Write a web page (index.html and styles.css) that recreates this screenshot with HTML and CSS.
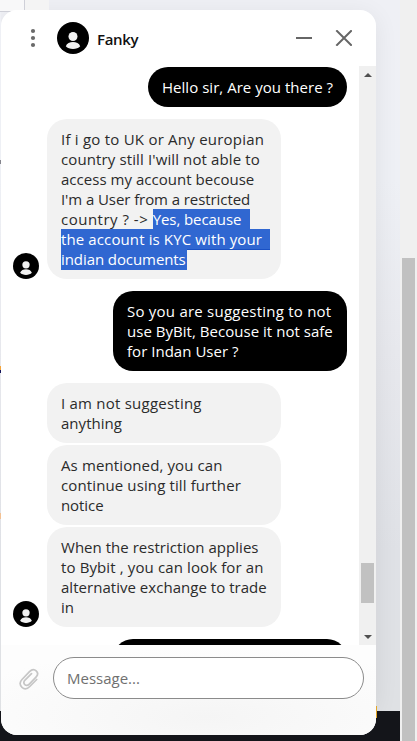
FILE: index.html
```html
<!DOCTYPE html>
<html lang="en">
<head>
<meta charset="utf-8">
<title>Fanky</title>
<link rel="stylesheet" href="styles.css">
</head>
<body>
<svg width="0" height="0" class="defs"><defs>
<symbol id="person" viewBox="0 0 32 32"><circle cx="16" cy="16" r="16" fill="#000"/><circle cx="16" cy="14.500" r="4.500" fill="#f2f2f2"/><path d="M8.800 24.300c1-3 4-4.300 7.200-4.300s6.200 1.300 7.200 4.300C21.600 26 19 27 16 27s-5.600-1-7.200-2.700z" fill="#f2f2f2"/></symbol>
</defs></svg>
<div class="page">
  <div class="corner"></div><div class="corner-strip"></div>
  <i class="edge edge-gray"></i><i class="edge edge-orange"></i><i class="edge edge-peach"></i>
  <i class="amber"></i>
  <main class="chat">
    <header class="head">
      <svg class="dots" width="6" height="20" viewBox="0 0 6 20" fill="#6a6a6a"><circle cx="3" cy="3" r="2.100"/><circle cx="3" cy="10" r="2.100"/><circle cx="3" cy="17" r="2.100"/></svg>
      <svg class="avatar-lg"><use href="#person"/></svg>
      <h1>Fanky</h1>
      <svg class="controls" width="56" height="16" viewBox="0 0 56 16" fill="none" stroke="#666" stroke-width="2"><path d="M0 8H16M40.300.3L55.700 15.700M55.700.3L40.300 15.700"/></svg>
    </header>
    <section class="body">
      <div class="messages">
        <div class="msg me first"><p><span class="t1">Hello sir, Are you there ?</span></p></div>
        <div class="msg"><svg class="avatar"><use href="#person"/></svg><p><span class="t3">If i go to UK or Any europian</span><br><span class="t2">country still I'will not able to</span><br><span class="t1">access my account becouse</span><br>I'm a User from a restricted<br><span class="t5">country ? -&gt; </span><span class="sel s1">Yes, because</span><br><span class="sel s2 t2">the account is KYC with your</span><br><span class="sel s3">indian documents</span></p></div>
        <div class="msg me"><p><span class="t3">So you are suggesting to not</span><br><span class="t1">use ByBit, Becouse it not safe</span><br><span class="t1">for Indan User ?</span></p></div>
        <div class="msg"><p><span class="t3">I am not suggesting</span><br><span class="t1">anything</span></p></div>
        <div class="msg joined"><p><span class="t2">As mentioned, you can</span><br><span class="t2">continue using till further</span><br>notice</p></div>
        <div class="msg joined"><svg class="avatar"><use href="#person"/></svg><p><span class="t1">When the restriction applies</span><br><span class="t2">to Bybit , you can look for an</span><br><span class="t1">alternative exchange to trade</span><br>in</p></div>
        <div class="msg me"><p>&nbsp;</p></div>
      </div>
      <div class="bar">
        <svg width="8" height="4" viewBox="0 0 8 4"><path d="M0 4L4 0l4 4z" fill="#505050"/></svg>
        <div class="thumb"></div>
        <svg width="8" height="4" viewBox="0 0 8 4"><path d="M0 0l4 4 4-4z" fill="#505050"/></svg>
      </div>
    </section>
    <footer class="foot">
      <svg class="clip" width="20" height="22" viewBox="0 0 20 22" fill="none" stroke="#c6c6c6" stroke-width="1.700" stroke-linecap="round"><path d="M17.700 11.500L10.800 18.500C8.500 20.800 5.500 21.600 3 19.300 .3 16.800 .7 13.900 3 11.500L10.500 3.700C12.500 1.600 15.200 1 17.200 2.900 19.300 4.900 18.800 7.300 17 9.200L10.300 16.100C8.900 17.500 7.200 17.900 5.800 16.600 4.300 15.200 4.700 13.500 6 12.200L12.500 5.700"/></svg>
      <div class="input">Message...</div>
    </footer>
  </main>
  <div class="page-bar"><div class="page-thumb"></div></div>
</div>
</body>
</html>
```
FILE: styles.css
```css
* { box-sizing: border-box; }
body { margin: 0; font-family: "Open Sans", "Noto Sans", sans-serif; font-size: 15px; line-height: 20px; }
.defs { position: absolute; }
.page {
  position: relative; display: flex; width: 417px; height: 741px; overflow: hidden;
  padding: 10px 0 0 1px;
  background: linear-gradient(#14151a, #14151a) 0 711px / 100% 30px no-repeat,
    linear-gradient(to bottom, #eff0f5 0, #eef0f5 180px, #e7e8ed 350px, #dfe1e6 550px, #dfe1e4 711px);
}
.corner { position: absolute; left: 0; top: 0; width: 25px; height: 12px; background: #f8f8f9; border-right: 1px solid #cfd0d8; border-bottom: 1px solid #cfd0d8; }
.corner-strip { position: absolute; left: 25px; top: 0; width: 24px; height: 12px; background: #f4f4f4; }
.edge { position: absolute; left: 0; width: 1px; }
.edge-gray { top: 160px; height: 4px; background: #85858d; }
.edge-orange { top: 366px; height: 7px; background: linear-gradient(#f4a43a 55%, #15155a 60%); }
.edge-peach { top: 513px; height: 6px; background: #f3c193; }
.amber { position: absolute; left: 375px; top: 706px; width: 2px; height: 12px; background: #e3a526; }
.chat {
  position: relative; display: flex; flex-direction: column; width: 375px; height: 725px;
  border-radius: 16px; overflow: hidden; background: #fff;
}
.page::before { content: ""; position: absolute; left: 1px; top: 10px; width: 375px; height: 701px; border-radius: 16px; box-shadow: 0 4px 24px rgba(0, 0, 0, .07); clip-path: inset(-10px -24px 0 0); }
.head { display: flex; align-items: center; height: 56px; padding: 0 24px 0 29px; }
.dots { margin-right: 21px; }
.avatar-lg { width: 32px; height: 32px; }
h1 { margin: 2px 0 0 8px; font-size: 15px; font-weight: 600; letter-spacing: -.3px; color: #111; }
.controls { margin-left: auto; }
.body { display: flex; height: 579px; }
.messages { width: 358px; padding: 1px 12px 0; overflow: hidden; }
.msg { display: flex; align-items: flex-end; margin-top: 12px; padding-left: 34px; white-space: nowrap; }
.msg.first { margin-top: 0; }
.joined { margin-top: 2px; }
.msg p { width: 234px; margin: 0; padding: 10px 0 10px 14px; border-radius: 20px; background: #f2f2f2; color: #2b2b2b; letter-spacing: -.08px; }
.t1 { letter-spacing: .03px; }
.t2 { letter-spacing: .12px; }
.t3 { letter-spacing: .23px; }
.t5 { letter-spacing: .5px; }
.me { justify-content: flex-end; }
.msg.me p { background: #000; color: #fff; }
.first p { width: 199px; }
.avatar { flex: none; width: 26px; height: 26px; margin: 0 8px 0 -34px; }
.sel { display: inline-block; height: 21px; margin-bottom: -1px; vertical-align: top; color: #fff; background: #3067d1; box-shadow: inset 0 -1px #1950c4; }
.s1 { width: 97px; }
.s2 { width: 209px; }
.s3 { width: 126px; box-shadow: none; }
.bar { display: flex; flex-direction: column; align-items: center; width: 17px; padding: 7px 0 6px; background: #f0f0f0; }
.thumb { width: 13px; height: 40px; margin: 486px 0 auto; background: #c1c1c1; }
.foot { display: flex; align-items: flex-start; height: 90px; padding: 12px 12px 0 18px; background: radial-gradient(ellipse 260px 70px at 55% 80%, #f5f5f5, #fdfdfd); }
.clip { margin: 11px 14px 0 0; }
.input { width: 311px; height: 42px; padding: 10px 13px; border: 1px solid #8b8b8b; border-radius: 21px; background: #fff; color: #707070; }
.page-bar { width: 17px; height: 741px; margin: -10px 0 0 24px; padding: 258px 2px 0; background: #f0f0f0; position: relative; }
.page-thumb { height: 483px; background: #c1c1c1; }
```
